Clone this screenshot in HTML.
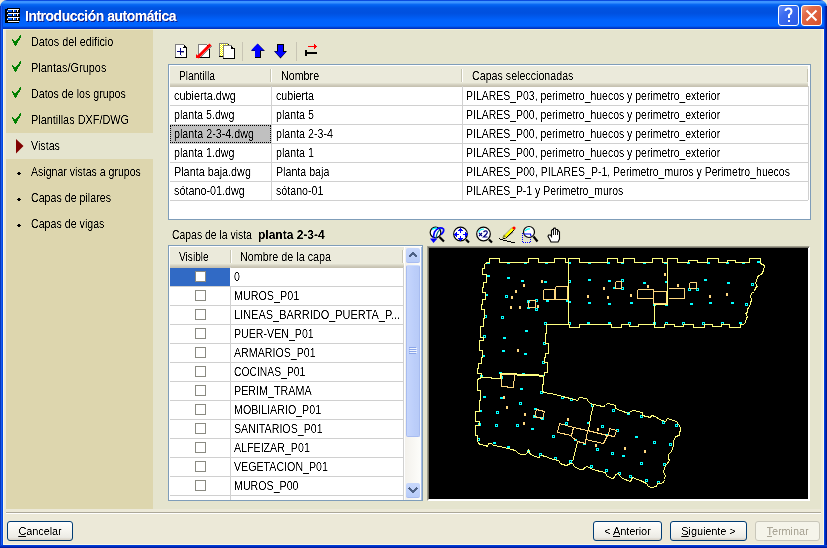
<!DOCTYPE html>
<html><head><meta charset="utf-8">
<style>
*{box-sizing:border-box;margin:0;padding:0}
html,body{width:827px;height:548px;overflow:hidden;background:#ece9d8}
body{position:relative;font-family:"Liberation Sans",sans-serif;font-size:11px;color:#000}
.a{position:absolute}
.t{position:absolute;white-space:nowrap;line-height:12px;font-size:12px;filter:url(#cr)}
.sx{display:inline-block;transform-origin:0 0}
.lab{position:relative;top:1px;letter-spacing:-0.1px;filter:url(#cr)}
#title{position:absolute;left:0;top:0;width:827px;height:29px;border-radius:7px 7px 0 0;
background:linear-gradient(to bottom,#0a4be0 0px,#0a4be0 1px,#3d95ff 1px,#3a91ff 3px,#0c6cf5 4px,#005ded 6px,#0053e1 8px,#0050df 13px,#0055e6 15px,#005cf3 18px,#0062fb 20px,#0063ff 26px,#0050e0 27px,#0036c8 28px,#0030c0 29px)}
#ttext{left:25px;top:9px;font-size:14px;line-height:15px;font-weight:bold;color:#fff;letter-spacing:-0.5px;text-shadow:1px 1px 0 #0a1e8c}
.side{position:absolute;left:6px;top:29px;width:147px;height:480px;background:#ddd6ae}
.panel{position:absolute;left:153px;top:29px;width:668px;height:480px;background:#e5e4ce}
.grid{position:absolute;background:#fff;border:1px solid #7f9db9}
.hdr{position:absolute;height:21px;background:linear-gradient(to bottom,#ebeadb 0,#ebeadb 17px,#e0dfcf 17px,#e0dfcf 18px,#d6d3c3 18px,#d6d3c3 19px,#cdc9b9 19px,#cdc9b9 20px,#c6c2b1 20px)}
.hsep{position:absolute;top:3px;width:1px;height:13px;background:#c7c5b2;box-shadow:1px 0 0 #fff}
.gl{position:absolute;background:#d0d0d0}
.btn{position:absolute;top:521px;height:20px;border:1px solid #003c74;border-radius:3px;
background:linear-gradient(to bottom,#fff 0%,#f8f7f2 40%,#ecebe5 85%,#d6d0c5 100%);text-align:center;line-height:17px}
</style></head><body>
<svg width="0" height="0" style="position:absolute"><filter id="cr" x="0" y="0" width="100%" height="100%"><feComponentTransfer><feFuncA type="linear" slope="2" intercept="-0.5"/></feComponentTransfer></filter></svg>
<div id="title"><div class="t" id="ttext">Introducción automática</div></div>
<div class="a" style="left:0;top:6px;width:3px;height:542px;background:linear-gradient(to right,#0a36b8 0px,#0a36b8 1px,#1a5cf0 1px,#1a5cf0 2px,#0048e0 2px)"></div>
<div class="a" style="left:824px;top:6px;width:3px;height:542px;background:linear-gradient(to right,#0040e0 0px,#0040e0 1px,#0028b8 1px,#0028b8 2px,#001890 2px)"></div>
<div class="a" style="left:0;top:545px;width:827px;height:3px;background:linear-gradient(to bottom,#0046e6,#0024b0 2px,#00169a)"></div>
<div class="a" style="left:3px;top:29px;width:1px;height:516px;background:#fbf7e4"></div>
<div class="a" style="left:823px;top:29px;width:1px;height:516px;background:#fbf7e4"></div>
<div class="a" style="left:3px;top:544px;width:821px;height:1px;background:#fbf7e4"></div>
<div class="side"></div><div class="panel"></div>
<div class="a" style="left:3px;top:29px;width:821px;height:1px;background:rgba(255,250,215,0.55)"></div>
<div class="a" style="left:6px;top:133px;width:147px;height:26px;background:#e5e4ce"></div>
<div class="t" style="left:31px;top:36px;"><span class="sx" style="transform:scaleX(0.9)">Datos del edificio</span></div>
<div class="t" style="left:31px;top:62px;"><span class="sx" style="transform:scaleX(0.911)">Plantas/Grupos</span></div>
<div class="t" style="left:31px;top:88px;"><span class="sx" style="transform:scaleX(0.889)">Datos de los grupos</span></div>
<div class="t" style="left:31px;top:114px;"><span class="sx" style="transform:scaleX(0.908)">Plantillas DXF/DWG</span></div>
<div class="t" style="left:31px;top:140px;"><span class="sx" style="transform:scaleX(0.891)">Vistas</span></div>
<div class="t" style="left:31px;top:166px;"><span class="sx" style="transform:scaleX(0.881)">Asignar vistas a grupos</span></div>
<div class="t" style="left:31px;top:192px;"><span class="sx" style="transform:scaleX(0.888)">Capas de pilares</span></div>
<div class="t" style="left:31px;top:218px;"><span class="sx" style="transform:scaleX(0.888)">Capas de vigas</span></div>
<svg class="a" style="left:0;top:0" width="30" height="240" shape-rendering="crispEdges"><g fill="#008000"><rect x="20" y="35" width="1" height="1"/><rect x="19" y="36" width="2" height="1"/><rect x="19" y="37" width="2" height="1"/><rect x="18" y="38" width="2" height="1"/><rect x="12" y="39" width="1" height="1"/><rect x="17" y="39" width="3" height="1"/><rect x="12" y="40" width="2" height="1"/><rect x="16" y="40" width="3" height="1"/><rect x="13" y="41" width="5" height="1"/><rect x="13" y="42" width="5" height="1"/><rect x="14" y="43" width="3" height="1"/><rect x="14" y="44" width="3" height="1"/><rect x="15" y="45" width="1" height="1"/><rect x="20" y="61" width="1" height="1"/><rect x="19" y="62" width="2" height="1"/><rect x="19" y="63" width="2" height="1"/><rect x="18" y="64" width="2" height="1"/><rect x="12" y="65" width="1" height="1"/><rect x="17" y="65" width="3" height="1"/><rect x="12" y="66" width="2" height="1"/><rect x="16" y="66" width="3" height="1"/><rect x="13" y="67" width="5" height="1"/><rect x="13" y="68" width="5" height="1"/><rect x="14" y="69" width="3" height="1"/><rect x="14" y="70" width="3" height="1"/><rect x="15" y="71" width="1" height="1"/><rect x="20" y="87" width="1" height="1"/><rect x="19" y="88" width="2" height="1"/><rect x="19" y="89" width="2" height="1"/><rect x="18" y="90" width="2" height="1"/><rect x="12" y="91" width="1" height="1"/><rect x="17" y="91" width="3" height="1"/><rect x="12" y="92" width="2" height="1"/><rect x="16" y="92" width="3" height="1"/><rect x="13" y="93" width="5" height="1"/><rect x="13" y="94" width="5" height="1"/><rect x="14" y="95" width="3" height="1"/><rect x="14" y="96" width="3" height="1"/><rect x="15" y="97" width="1" height="1"/><rect x="20" y="113" width="1" height="1"/><rect x="19" y="114" width="2" height="1"/><rect x="19" y="115" width="2" height="1"/><rect x="18" y="116" width="2" height="1"/><rect x="12" y="117" width="1" height="1"/><rect x="17" y="117" width="3" height="1"/><rect x="12" y="118" width="2" height="1"/><rect x="16" y="118" width="3" height="1"/><rect x="13" y="119" width="5" height="1"/><rect x="13" y="120" width="5" height="1"/><rect x="14" y="121" width="3" height="1"/><rect x="14" y="122" width="3" height="1"/><rect x="15" y="123" width="1" height="1"/></g><polygon points="16,139 16,153.5 23.5,146" fill="#800000" shape-rendering="geometricPrecision"/><g fill="#000"><rect x="18" y="172" width="2" height="3"/><rect x="17" y="173" width="4" height="1"/><rect x="18" y="198" width="2" height="3"/><rect x="17" y="199" width="4" height="1"/><rect x="18" y="224" width="2" height="3"/><rect x="17" y="225" width="4" height="1"/></g></svg>
<svg class="a" style="left:0;top:0" width="827" height="29" shape-rendering="crispEdges">
<g fill="#000"><rect x="7" y="8" width="13" height="1"/><rect x="5" y="12" width="15" height="1"/><rect x="5" y="16" width="15" height="1"/><rect x="5" y="20" width="15" height="1"/><rect x="5" y="22" width="14" height="1"/><rect x="5" y="9" width="2" height="13"/><rect x="7" y="9" width="1" height="1"/><rect x="7" y="13" width="1" height="1"/><rect x="7" y="17" width="1" height="1"/><rect x="7" y="21" width="1" height="1"/><rect x="19" y="9" width="1" height="1"/><rect x="12" y="10" width="1" height="2"/><rect x="16" y="10" width="1" height="2"/><rect x="18" y="10" width="2" height="2"/><rect x="5" y="10" width="2" height="2"/><rect x="12" y="14" width="1" height="2"/><rect x="16" y="14" width="1" height="2"/><rect x="18" y="14" width="2" height="2"/><rect x="5" y="14" width="2" height="2"/><rect x="12" y="18" width="1" height="2"/><rect x="16" y="18" width="1" height="2"/><rect x="18" y="18" width="2" height="2"/><rect x="5" y="18" width="2" height="2"/><rect x="11" y="22" width="1" height="1"/></g><g fill="#fff"><rect x="8" y="9" width="11" height="1"/><rect x="8" y="13" width="11" height="1"/><rect x="8" y="17" width="11" height="1"/><rect x="8" y="21" width="11" height="1"/><rect x="13" y="10" width="1" height="2"/><rect x="17" y="10" width="1" height="2"/><rect x="7" y="11" width="1" height="1"/><rect x="13" y="14" width="1" height="2"/><rect x="17" y="14" width="1" height="2"/><rect x="7" y="15" width="1" height="1"/><rect x="13" y="18" width="1" height="2"/><rect x="17" y="18" width="1" height="2"/><rect x="7" y="19" width="1" height="1"/></g>
</svg>
<div class="a" style="left:778px;top:5px;width:21px;height:21px;border:1px solid #fff;border-radius:3px;background:linear-gradient(135deg,#6a90f8 0%,#3c6cf0 35%,#2a5ae6 100%)"></div>
<div class="a" style="left:801px;top:5px;width:21px;height:21px;border:1px solid #fff;border-radius:3px;background:linear-gradient(135deg,#f0a080 0%,#e26a48 30%,#d8502a 100%)"></div>
<svg class="a" style="left:0;top:0" width="827" height="29">
<path d="M785.5,11 Q785.5,8.5 788.5,8.5 Q791.5,8.5 791.5,11.5 Q791.5,13.5 789,15 L789,18" stroke="#fff" stroke-width="2" fill="none"/>
<rect x="788" y="20" width="2" height="2" fill="#fff"/>
<path d="M806.5,10.5 L816.5,20.5 M816.5,10.5 L806.5,20.5" stroke="#fff" stroke-width="2"/>
</svg>
<svg class="a" style="left:0;top:0" width="330" height="64" shape-rendering="crispEdges">
<!-- icon1 new -->
<rect x="175" y="44" width="9" height="1" fill="#808080"/>
<rect x="175" y="44" width="1" height="14" fill="#808080"/>
<rect x="176" y="45" width="8" height="12" fill="#fff"/>
<rect x="184" y="47" width="2" height="10" fill="#fff"/>
<rect x="184" y="45" width="1" height="2" fill="#000"/><rect x="185" y="46" width="1" height="1" fill="#000"/><rect x="183" y="47" width="3" height="1" fill="#000"/>
<rect x="186" y="47" width="1" height="11" fill="#000"/>
<rect x="175" y="57" width="12" height="1" fill="#000"/>
<rect x="180" y="48" width="1" height="7" fill="#000080"/><rect x="177" y="51" width="7" height="1" fill="#000080"/>
<rect x="181" y="52" width="3" height="1" fill="#a0a0a0"/><rect x="181" y="55" width="1" height="1" fill="#a0a0a0"/>
<!-- icon2 delete -->
<rect x="198" y="44" width="9" height="1" fill="#808080"/>
<rect x="198" y="44" width="1" height="14" fill="#808080"/>
<rect x="199" y="45" width="10" height="12" fill="#fff"/>
<rect x="209" y="48" width="1" height="10" fill="#000"/>
<rect x="199" y="57" width="11" height="1" fill="#000"/>
<rect x="207" y="45" width="1" height="2" fill="#000"/>
</svg>
<svg class="a" style="left:0;top:0" width="330" height="64">
<path d="M210.5,44.5 L197.5,57.5" stroke="#ff0000" stroke-width="3" />
<path d="M212,46 L201,57" stroke="#7a8a8a" stroke-width="1" />
<path d="M196,54 L196,58 L200,58 Z" fill="#ff0000"/>
</svg>
<svg class="a" style="left:0;top:0" width="330" height="64" shape-rendering="crispEdges">
<!-- icon3 copy -->
<rect x="219" y="43" width="9" height="1" fill="#808080"/>
<rect x="219" y="43" width="1" height="14" fill="#808080"/>
<rect x="220" y="44" width="8" height="12" fill="#ffff00"/>
<rect x="228" y="44" width="1" height="1" fill="#000"/>
<rect x="219" y="56" width="4" height="1" fill="#000"/>
<g fill="#fff"><rect x="220" y="44" width="1" height="1"/><rect x="222" y="44" width="1" height="1"/><rect x="224" y="44" width="1" height="1"/><rect x="226" y="44" width="1" height="1"/><rect x="221" y="45" width="1" height="1"/><rect x="223" y="45" width="1" height="1"/><rect x="225" y="45" width="1" height="1"/><rect x="227" y="45" width="1" height="1"/><rect x="220" y="46" width="1" height="1"/><rect x="222" y="46" width="1" height="1"/><rect x="224" y="46" width="1" height="1"/><rect x="226" y="46" width="1" height="1"/><rect x="221" y="47" width="1" height="1"/><rect x="223" y="47" width="1" height="1"/><rect x="225" y="47" width="1" height="1"/><rect x="227" y="47" width="1" height="1"/><rect x="220" y="48" width="1" height="1"/><rect x="222" y="48" width="1" height="1"/><rect x="224" y="48" width="1" height="1"/><rect x="226" y="48" width="1" height="1"/><rect x="221" y="49" width="1" height="1"/><rect x="223" y="49" width="1" height="1"/><rect x="225" y="49" width="1" height="1"/><rect x="227" y="49" width="1" height="1"/><rect x="220" y="50" width="1" height="1"/><rect x="222" y="50" width="1" height="1"/><rect x="224" y="50" width="1" height="1"/><rect x="226" y="50" width="1" height="1"/><rect x="221" y="51" width="1" height="1"/><rect x="223" y="51" width="1" height="1"/><rect x="225" y="51" width="1" height="1"/><rect x="227" y="51" width="1" height="1"/><rect x="220" y="52" width="1" height="1"/><rect x="222" y="52" width="1" height="1"/><rect x="224" y="52" width="1" height="1"/><rect x="226" y="52" width="1" height="1"/><rect x="221" y="53" width="1" height="1"/><rect x="223" y="53" width="1" height="1"/><rect x="225" y="53" width="1" height="1"/><rect x="227" y="53" width="1" height="1"/><rect x="220" y="54" width="1" height="1"/><rect x="222" y="54" width="1" height="1"/><rect x="224" y="54" width="1" height="1"/><rect x="226" y="54" width="1" height="1"/><rect x="221" y="55" width="1" height="1"/><rect x="223" y="55" width="1" height="1"/><rect x="225" y="55" width="1" height="1"/><rect x="227" y="55" width="1" height="1"/></g>
<rect x="223" y="45" width="9" height="1" fill="#808080"/>
<rect x="223" y="45" width="1" height="14" fill="#808080"/>
<rect x="224" y="46" width="8" height="12" fill="#fff"/>
<rect x="232" y="48" width="2" height="10" fill="#fff"/>
<rect x="231" y="46" width="1" height="2" fill="#000"/><rect x="232" y="47" width="1" height="1" fill="#000"/><rect x="231" y="48" width="3" height="1" fill="#000"/>
<rect x="234" y="48" width="1" height="11" fill="#000"/>
<rect x="223" y="58" width="12" height="1" fill="#000"/>
<!-- separators -->
<rect x="242" y="42" width="1" height="19" fill="#c8c5b4"/>
<rect x="296" y="42" width="1" height="19" fill="#c8c5b4"/>
<!-- T icon -->
<rect x="305" y="50" width="2" height="6" fill="#000"/>
<rect x="307" y="52" width="10" height="2" fill="#000"/>
<rect x="308" y="46" width="7" height="1" fill="#ff0000"/>
<rect x="314" y="44" width="1" height="5" fill="#ff0000"/><rect x="315" y="45" width="1" height="3" fill="#ff0000"/><rect x="316" y="46" width="1" height="1" fill="#ff0000"/>
</svg>
<svg class="a" style="left:0;top:0" width="330" height="64">
<polygon points="258,44 265,51 261,51 261,58 255,58 255,51 251,51" fill="#000"/>
<polygon points="257.5,43.5 251,50.5 255,50.5 255,57 260,57 260,50.5 264,50.5" fill="#0000ff"/>
<polygon points="277,44 284,44 284,51 287,51 280.5,58.5 274,51 277,51" fill="#000"/>
<polygon points="278,45 283,45 283,52 286,52 280.5,57.5 274.5,51.5 278,51.5" fill="#0000ff"/>
</svg>
<div class="grid" style="left:168px;top:64px;width:643px;height:156px"></div>
<div class="hdr" style="left:170px;top:66px;width:638px"></div>
<div class="hsep" style="left:270px;top:69px"></div>
<div class="hsep" style="left:461px;top:69px"></div>
<div class="hsep" style="left:807px;top:69px"></div>
<div class="t" style="left:179px;top:70px;"><span class="sx" style="transform:scaleX(0.854)">Plantilla</span></div>
<div class="t" style="left:281px;top:70px;"><span class="sx" style="transform:scaleX(0.893)">Nombre</span></div>
<div class="t" style="left:472px;top:70px;"><span class="sx" style="transform:scaleX(0.889)">Capas seleccionadas</span></div>
<div class="gl" style="left:271px;top:86px;width:1px;height:114px"></div>
<div class="gl" style="left:462px;top:86px;width:1px;height:114px"></div>
<div class="gl" style="left:808px;top:86px;width:1px;height:114px"></div>
<div class="gl" style="left:170px;top:105px;width:638px;height:1px"></div>
<div class="gl" style="left:170px;top:124px;width:638px;height:1px"></div>
<div class="gl" style="left:170px;top:143px;width:638px;height:1px"></div>
<div class="gl" style="left:170px;top:162px;width:638px;height:1px"></div>
<div class="gl" style="left:170px;top:181px;width:638px;height:1px"></div>
<div class="gl" style="left:170px;top:200px;width:638px;height:1px"></div>
<div class="a" style="left:170px;top:125px;width:101px;height:18px;background:#c0c0c0;border:1px dotted #000"></div>
<div class="t" style="left:174px;top:90px;"><span class="sx" style="transform:scaleX(0.909)">cubierta.dwg</span></div>
<div class="t" style="left:276px;top:90px;"><span class="sx" style="transform:scaleX(0.888)">cubierta</span></div>
<div class="t" style="left:466px;top:90px;"><span class="sx" style="transform:scaleX(0.872)">PILARES_P03, perimetro_huecos y perimetro_exterior</span></div>
<div class="t" style="left:174px;top:109px;"><span class="sx" style="transform:scaleX(0.888)">planta 5.dwg</span></div>
<div class="t" style="left:276px;top:109px;"><span class="sx" style="transform:scaleX(0.888)">planta 5</span></div>
<div class="t" style="left:466px;top:109px;"><span class="sx" style="transform:scaleX(0.872)">PILARES_P00, perimetro_huecos y perimetro_exterior</span></div>
<div class="t" style="left:174px;top:128px;"><span class="sx" style="transform:scaleX(0.894)">planta 2-3-4.dwg</span></div>
<div class="t" style="left:276px;top:128px;"><span class="sx" style="transform:scaleX(0.888)">planta 2-3-4</span></div>
<div class="t" style="left:466px;top:128px;"><span class="sx" style="transform:scaleX(0.872)">PILARES_P00, perimetro_huecos y perimetro_exterior</span></div>
<div class="t" style="left:174px;top:147px;"><span class="sx" style="transform:scaleX(0.888)">planta 1.dwg</span></div>
<div class="t" style="left:276px;top:147px;"><span class="sx" style="transform:scaleX(0.888)">planta 1</span></div>
<div class="t" style="left:466px;top:147px;"><span class="sx" style="transform:scaleX(0.872)">PILARES_P00, perimetro_huecos y perimetro_exterior</span></div>
<div class="t" style="left:174px;top:166px;"><span class="sx" style="transform:scaleX(0.901)">Planta baja.dwg</span></div>
<div class="t" style="left:276px;top:166px;"><span class="sx" style="transform:scaleX(0.888)">Planta baja</span></div>
<div class="t" style="left:466px;top:166px;"><span class="sx" style="transform:scaleX(0.875)">PILARES_P00, PILARES_P-1, Perimetro_muros y Perimetro_huecos</span></div>
<div class="t" style="left:174px;top:185px;"><span class="sx" style="transform:scaleX(0.899)">sótano-01.dwg</span></div>
<div class="t" style="left:276px;top:185px;"><span class="sx" style="transform:scaleX(0.888)">sótano-01</span></div>
<div class="t" style="left:466px;top:185px;"><span class="sx" style="transform:scaleX(0.87)">PILARES_P-1 y Perimetro_muros</span></div>
<div class="t" style="left:172px;top:229px;"><span class="sx" style="transform:scaleX(0.868)">Capas de la vista</span></div>
<div class="t" style="left:258px;top:229px;font-weight:bold"><span class="sx" style="transform:scaleX(1.0)">planta 2-3-4</span></div>
<div class="grid" style="left:168px;top:245px;width:255px;height:256px;overflow:hidden">
<div class="hdr" style="left:1px;top:1px;width:234px"></div>
<div class="hsep" style="left:61px;top:4px"></div>
<div class="hsep" style="left:233px;top:4px"></div>
<div class="t" style="left:10px;top:5px;"><span class="sx" style="transform:scaleX(0.846)">Visible</span></div>
<div class="t" style="left:71px;top:5px;"><span class="sx" style="transform:scaleX(0.898)">Nombre de la capa</span></div>
<div class="gl" style="left:61px;top:21px;width:1px;height:240px"></div>
<div class="gl" style="left:234px;top:21px;width:1px;height:240px"></div>
<div class="gl" style="left:1px;top:40px;width:234px;height:1px"></div>
<div class="gl" style="left:1px;top:59px;width:234px;height:1px"></div>
<div class="gl" style="left:1px;top:78px;width:234px;height:1px"></div>
<div class="gl" style="left:1px;top:97px;width:234px;height:1px"></div>
<div class="gl" style="left:1px;top:116px;width:234px;height:1px"></div>
<div class="gl" style="left:1px;top:135px;width:234px;height:1px"></div>
<div class="gl" style="left:1px;top:154px;width:234px;height:1px"></div>
<div class="gl" style="left:1px;top:173px;width:234px;height:1px"></div>
<div class="gl" style="left:1px;top:192px;width:234px;height:1px"></div>
<div class="gl" style="left:1px;top:211px;width:234px;height:1px"></div>
<div class="gl" style="left:1px;top:230px;width:234px;height:1px"></div>
<div class="gl" style="left:1px;top:249px;width:234px;height:1px"></div>
<div class="gl" style="left:1px;top:268px;width:234px;height:1px"></div>
<div class="a" style="left:1px;top:22px;width:60px;height:18px;background:#316ac5"></div>
<div class="a" style="left:61px;top:22px;width:1px;height:18px;background:#fff"></div>
<div class="a" style="left:26px;top:25px;width:11px;height:11px;border:1px solid #8a8a82;background:#fff"></div>
<div class="t" style="left:65px;top:25px;"><span class="sx" style="transform:scaleX(0.888)">0</span></div>
<div class="a" style="left:26px;top:44px;width:11px;height:11px;border:1px solid #8a8a82;background:#fff"></div>
<div class="t" style="left:65px;top:44px;"><span class="sx" style="transform:scaleX(0.896)">MUROS_P01</span></div>
<div class="a" style="left:26px;top:63px;width:11px;height:11px;border:1px solid #8a8a82;background:#fff"></div>
<div class="t" style="left:65px;top:63px;"><span class="sx" style="transform:scaleX(0.915)">LINEAS_BARRIDO_PUERTA_P...</span></div>
<div class="a" style="left:26px;top:82px;width:11px;height:11px;border:1px solid #8a8a82;background:#fff"></div>
<div class="t" style="left:65px;top:82px;"><span class="sx" style="transform:scaleX(0.886)">PUER-VEN_P01</span></div>
<div class="a" style="left:26px;top:101px;width:11px;height:11px;border:1px solid #8a8a82;background:#fff"></div>
<div class="t" style="left:65px;top:101px;"><span class="sx" style="transform:scaleX(0.887)">ARMARIOS_P01</span></div>
<div class="a" style="left:26px;top:120px;width:11px;height:11px;border:1px solid #8a8a82;background:#fff"></div>
<div class="t" style="left:65px;top:120px;"><span class="sx" style="transform:scaleX(0.862)">COCINAS_P01</span></div>
<div class="a" style="left:26px;top:139px;width:11px;height:11px;border:1px solid #8a8a82;background:#fff"></div>
<div class="t" style="left:65px;top:139px;"><span class="sx" style="transform:scaleX(0.895)">PERIM_TRAMA</span></div>
<div class="a" style="left:26px;top:158px;width:11px;height:11px;border:1px solid #8a8a82;background:#fff"></div>
<div class="t" style="left:65px;top:158px;"><span class="sx" style="transform:scaleX(0.888)">MOBILIARIO_P01</span></div>
<div class="a" style="left:26px;top:177px;width:11px;height:11px;border:1px solid #8a8a82;background:#fff"></div>
<div class="t" style="left:65px;top:177px;"><span class="sx" style="transform:scaleX(0.888)">SANITARIOS_P01</span></div>
<div class="a" style="left:26px;top:196px;width:11px;height:11px;border:1px solid #8a8a82;background:#fff"></div>
<div class="t" style="left:65px;top:196px;"><span class="sx" style="transform:scaleX(0.888)">ALFEIZAR_P01</span></div>
<div class="a" style="left:26px;top:215px;width:11px;height:11px;border:1px solid #8a8a82;background:#fff"></div>
<div class="t" style="left:65px;top:215px;"><span class="sx" style="transform:scaleX(0.888)">VEGETACION_P01</span></div>
<div class="a" style="left:26px;top:234px;width:11px;height:11px;border:1px solid #8a8a82;background:#fff"></div>
<div class="t" style="left:65px;top:234px;"><span class="sx" style="transform:scaleX(0.888)">MUROS_P00</span></div>
<div class="a" style="left:236px;top:1px;width:17px;height:253px;background:linear-gradient(to right,#f3f1ec,#fefefb)"></div>
<div class="a" style="left:237px;top:2px;width:14px;height:15px;border-radius:2px;background:linear-gradient(to bottom,#c8d8fc,#b8ccf8);border-bottom:1px solid #a8bcf0"></div>
<svg class="a" style="left:237px;top:2px" width="15" height="15" shape-rendering="crispEdges"><path d="M3,9 L7,5 L11,9" stroke="#4d6185" stroke-width="2" fill="none"/></svg>
<div class="a" style="left:237px;top:19px;width:14px;height:172px;border-radius:2px;background:linear-gradient(to right,#c6d6fc,#bccefa 60%,#b8cbf7);border:1px solid #a8bcf0;border-top-color:#ccdcfd"></div>
<svg class="a" style="left:240px;top:101px" width="8" height="8" shape-rendering="crispEdges"><g fill="#8aa5e8"><rect x="0" y="0" width="7" height="1"/><rect x="0" y="2" width="7" height="1"/><rect x="0" y="4" width="7" height="1"/><rect x="0" y="6" width="7" height="1"/></g><g fill="#eef3fe"><rect x="1" y="1" width="7" height="1"/><rect x="1" y="3" width="7" height="1"/><rect x="1" y="5" width="7" height="1"/></g></svg>
<div class="a" style="left:237px;top:237px;width:14px;height:15px;border-radius:2px;background:linear-gradient(to bottom,#c8d8fc,#b8ccf8);border-bottom:1px solid #a8bcf0"></div>
<svg class="a" style="left:237px;top:237px" width="15" height="15" shape-rendering="crispEdges"><path d="M3,5 L7,9 L11,5" stroke="#4d6185" stroke-width="2" fill="none"/></svg>
<div class="a" style="left:252px;top:1px;width:1px;height:253px;background:#a6bde8"></div>
</div>
<svg class="a" style="left:0;top:0" width="600" height="250">
<!-- icon 1: zoom previous -->
<circle cx="435.5" cy="232.5" r="5.3" fill="#fff" stroke="#000" stroke-width="1.2"/>
<path d="M432,229.5 Q434,228 437,228" stroke="#00ffff" stroke-width="1.3" fill="none"/>
<path d="M439.5,237 L444,241.5" stroke="#000" stroke-width="2.2"/>
<path d="M441,229 Q437,231 436,238" stroke="#0a6a8a" stroke-width="1.2" fill="none"/>
<path d="M441,234.5 Q444.5,231.5 443.5,229 Q442,227.5 439,228 Q436,229.5 434.5,232 Q433.5,235 433.5,238" stroke="#0000ff" stroke-width="1.7" fill="none"/>
<polygon points="430,238.5 437.5,238.5 433.5,243" fill="#0000ff"/>
<!-- icon 2: zoom extents -->
<circle cx="460.5" cy="234" r="6.8" fill="#fff" stroke="#000" stroke-width="1.2"/>
<path d="M466,239.5 L469,242.5" stroke="#000" stroke-width="2.2"/>
<g fill="#0000ff" shape-rendering="crispEdges">
<rect x="460" y="228" width="1" height="1"/><rect x="459" y="229" width="3" height="1"/><rect x="458" y="230" width="5" height="1"/><rect x="460" y="231" width="1" height="2"/>
<rect x="460" y="240" width="1" height="1"/><rect x="459" y="239" width="3" height="1"/><rect x="458" y="238" width="5" height="1"/><rect x="460" y="236" width="1" height="2"/>
<rect x="454" y="234" width="1" height="1"/><rect x="455" y="233" width="1" height="3"/><rect x="456" y="232" width="1" height="5"/><rect x="457" y="234" width="2" height="1"/>
<rect x="467" y="234" width="1" height="1"/><rect x="466" y="233" width="1" height="3"/><rect x="465" y="232" width="1" height="5"/><rect x="463" y="234" width="2" height="1"/>
</g>
<!-- icon 3: x2 -->
<circle cx="483.5" cy="234" r="6.8" fill="#fff" stroke="#000" stroke-width="1.2"/>
<path d="M489,239.5 L492,242.5" stroke="#000" stroke-width="2.2"/>
<path d="M478.5,232.5 Q480,229 484,229" stroke="#00ffff" stroke-width="1.2" fill="none"/>
<path d="M479,233 L482,236 M482,233 L479,236" stroke="#000080" stroke-width="1.1"/>
<path d="M483.5,232 Q485,230.5 486.5,231 Q488,232 486.5,234 L483.5,237 L487.5,237" stroke="#000080" stroke-width="1.2" fill="none"/>
<!-- icon 4: pencil -->
<g fill="#000" shape-rendering="crispEdges"><rect x="499" y="238" width="1" height="1"/><rect x="500" y="239" width="3" height="1"/><rect x="503" y="238" width="2" height="1"/><rect x="503" y="240" width="4" height="1"/><rect x="507" y="241" width="4" height="1"/><rect x="511" y="242" width="4" height="1"/></g>
<path d="M505.5,238 L513,232" stroke="#888" stroke-width="1.5" fill="none"/>
<path d="M504.5,237 L513.5,228" stroke="#ffff00" stroke-width="3" fill="none"/>
<path d="M505.5,238.5 L514.5,229.5" stroke="#000" stroke-width="1" fill="none"/>
<path d="M503.5,236 L512,227.5" stroke="#8888aa" stroke-width="0.8" fill="none"/>
<polygon points="502,238.5 504,234.5 506,236.5" fill="#8a8a20"/>
<circle cx="514" cy="228" r="1.6" fill="#ff0000"/>
<!-- icon 5: zoom window -->
<g fill="#0000ff" shape-rendering="crispEdges"><rect x="522" y="233" width="1" height="1"/><rect x="522" y="235" width="1" height="1"/><rect x="522" y="237" width="1" height="1"/><rect x="522" y="239" width="1" height="1"/><rect x="522" y="241" width="1" height="1"/><rect x="523" y="242" width="1" height="1"/><rect x="525" y="242" width="1" height="1"/><rect x="527" y="242" width="1" height="1"/><rect x="529" y="242" width="1" height="1"/><rect x="530" y="241" width="1" height="1"/><rect x="530" y="239" width="1" height="1"/><rect x="530" y="237" width="1" height="1"/></g>
<circle cx="529" cy="232" r="5.5" fill="#fff" stroke="#000" stroke-width="1.2"/>
<path d="M525,231 Q527,228.5 530,229" stroke="#00ffff" stroke-width="1.2" fill="none"/>
<path d="M524,234 L530.5,234 L531,236" stroke="#0000ff" stroke-width="1.2" fill="none"/>
<path d="M533.5,236.5 L537.5,241.5" stroke="#000" stroke-width="2.2"/>
<!-- icon 6: hand -->
<path d="M548.5,235 L550.5,235 L551.5,236.5 L551.5,230.5 L552.5,229.5 L553.5,229.5 L553.5,228.5 L555,228 L556,229.5 L557.5,229.5 L558.5,231 L559.5,232 L559.5,239 L558.5,241 L558,242 L551,242 L549.5,239 L548,236.5 Z" fill="#fff" stroke="#000" stroke-width="1.1"/>
<path d="M553.5,230 L553.5,235 M555.5,229.5 L555.5,235 M557.5,230 L557.5,235" stroke="#000" stroke-width="0.9"/>
</svg>
<div class="a" style="left:427px;top:246px;width:383px;height:255px;background:#000;border-style:solid;border-width:2px 2px 2px 2px;border-color:#a09e8e #fff #fff #a09e8e"></div>
<div class="a" style="left:428px;top:247px;width:381px;height:1px;background:#716f64"></div>
<div class="a" style="left:428px;top:247px;width:1px;height:252px;background:#716f64"></div>
<svg class="a" style="left:0;top:0" width="827" height="548"><g fill="#00ffff" shape-rendering="crispEdges"><rect x="487" y="262" width="3" height="2"/><rect x="507" y="262" width="3" height="2"/><rect x="524" y="262" width="3" height="2"/><rect x="545" y="262" width="3" height="2"/><rect x="568" y="262" width="3" height="2"/><rect x="588" y="262" width="3" height="2"/><rect x="607" y="262" width="3" height="2"/><rect x="621" y="262" width="3" height="2"/><rect x="643" y="262" width="3" height="2"/><rect x="664" y="262" width="3" height="2"/><rect x="687" y="262" width="3" height="2"/><rect x="707" y="262" width="3" height="2"/><rect x="726" y="262" width="3" height="2"/><rect x="742" y="262" width="3" height="2"/><rect x="757" y="261" width="3" height="2"/><rect x="487" y="275" width="3" height="2"/><rect x="507" y="277" width="3" height="2"/><rect x="521" y="280" width="3" height="2"/><rect x="544" y="281" width="3" height="2"/><rect x="588" y="279" width="3" height="2"/><rect x="608" y="280" width="3" height="2"/><rect x="643" y="282" width="3" height="2"/><rect x="665" y="281" width="3" height="2"/><rect x="704" y="279" width="3" height="2"/><rect x="727" y="282" width="3" height="2"/><rect x="485" y="294" width="3" height="2"/><rect x="546" y="300" width="3" height="2"/><rect x="566" y="300" width="3" height="2"/><rect x="613" y="287" width="3" height="2"/><rect x="527" y="307" width="3" height="2"/><rect x="568" y="301" width="3" height="2"/><rect x="588" y="302" width="3" height="2"/><rect x="608" y="303" width="3" height="2"/><rect x="630" y="302" width="3" height="2"/><rect x="665" y="304" width="3" height="2"/><rect x="690" y="303" width="3" height="2"/><rect x="709" y="302" width="3" height="2"/><rect x="731" y="302" width="3" height="2"/><rect x="525" y="330" width="3" height="2"/><rect x="503" y="337" width="3" height="2"/><rect x="502" y="350" width="3" height="2"/><rect x="524" y="353" width="3" height="2"/><rect x="482" y="355" width="3" height="2"/><rect x="587" y="322" width="3" height="2"/><rect x="608" y="322" width="3" height="2"/><rect x="739" y="322" width="3" height="2"/><rect x="480" y="375" width="3" height="2"/><rect x="499" y="372" width="3" height="2"/><rect x="522" y="373" width="3" height="2"/><rect x="541" y="375" width="3" height="2"/><rect x="520" y="388" width="3" height="2"/><rect x="500" y="397" width="3" height="2"/><rect x="483" y="396" width="3" height="2"/><rect x="479" y="410" width="3" height="2"/><rect x="534" y="408" width="3" height="2"/><rect x="493" y="442" width="3" height="2"/><rect x="507" y="446" width="3" height="2"/><rect x="531" y="428" width="3" height="2"/><rect x="587" y="422" width="3" height="2"/><rect x="635" y="436" width="3" height="2"/><rect x="574" y="439" width="3" height="2"/><rect x="583" y="443" width="3" height="2"/><rect x="606" y="434" width="3" height="2"/><rect x="622" y="455" width="3" height="2"/></g><g fill="#00ffff" shape-rendering="crispEdges"><rect x="505" y="295" width="3" height="3"/><rect x="527" y="300" width="3" height="3"/><rect x="535" y="299" width="3" height="3"/><rect x="535" y="308" width="3" height="3"/><rect x="568" y="280" width="3" height="3"/><rect x="621" y="279" width="3" height="3"/><rect x="621" y="287" width="3" height="3"/><rect x="653" y="303" width="3" height="3"/><rect x="751" y="283" width="3" height="3"/><rect x="688" y="288" width="3" height="3"/><rect x="696" y="288" width="3" height="3"/><rect x="745" y="303" width="3" height="3"/><rect x="484" y="315" width="3" height="3"/><rect x="501" y="316" width="3" height="3"/><rect x="483" y="335" width="3" height="3"/><rect x="544" y="322" width="3" height="3"/><rect x="543" y="342" width="3" height="3"/><rect x="542" y="361" width="3" height="3"/><rect x="568" y="322" width="3" height="3"/><rect x="628" y="322" width="3" height="3"/><rect x="653" y="322" width="3" height="3"/><rect x="665" y="322" width="3" height="3"/><rect x="682" y="322" width="3" height="3"/><rect x="702" y="322" width="3" height="3"/><rect x="721" y="322" width="3" height="3"/><rect x="500" y="376" width="3" height="3"/><rect x="519" y="402" width="3" height="3"/><rect x="496" y="411" width="3" height="3"/><rect x="533" y="415" width="3" height="3"/><rect x="541" y="417" width="3" height="3"/><rect x="540" y="391" width="3" height="3"/><rect x="561" y="396" width="3" height="3"/><rect x="478" y="423" width="3" height="3"/><rect x="495" y="424" width="3" height="3"/><rect x="516" y="424" width="3" height="3"/><rect x="477" y="438" width="3" height="3"/><rect x="527" y="450" width="3" height="3"/><rect x="539" y="453" width="3" height="3"/><rect x="591" y="404" width="3" height="3"/><rect x="612" y="409" width="3" height="3"/><rect x="627" y="412" width="3" height="3"/><rect x="640" y="415" width="3" height="3"/><rect x="662" y="421" width="3" height="3"/><rect x="675" y="424" width="3" height="3"/><rect x="565" y="422" width="3" height="3"/><rect x="601" y="425" width="3" height="3"/><rect x="616" y="429" width="3" height="3"/><rect x="552" y="435" width="3" height="3"/><rect x="653" y="441" width="3" height="3"/><rect x="669" y="443" width="3" height="3"/><rect x="596" y="448" width="3" height="3"/><rect x="611" y="452" width="3" height="3"/><rect x="640" y="462" width="3" height="3"/><rect x="663" y="463" width="3" height="3"/><rect x="554" y="457" width="3" height="3"/><rect x="569" y="460" width="3" height="3"/><rect x="590" y="465" width="3" height="3"/><rect x="605" y="469" width="3" height="3"/><rect x="618" y="472" width="3" height="3"/><rect x="629" y="475" width="3" height="3"/><rect x="645" y="479" width="3" height="3"/><rect x="657" y="481" width="3" height="3"/><rect x="561" y="396" width="3" height="3"/><rect x="570" y="398" width="3" height="3"/></g><g fill="#000" shape-rendering="crispEdges"><rect x="506" y="296" width="1" height="1"/><rect x="528" y="301" width="1" height="1"/><rect x="536" y="300" width="1" height="1"/><rect x="536" y="309" width="1" height="1"/><rect x="569" y="281" width="1" height="1"/><rect x="622" y="280" width="1" height="1"/><rect x="622" y="288" width="1" height="1"/><rect x="654" y="304" width="1" height="1"/><rect x="752" y="284" width="1" height="1"/><rect x="689" y="289" width="1" height="1"/><rect x="697" y="289" width="1" height="1"/><rect x="746" y="304" width="1" height="1"/><rect x="485" y="316" width="1" height="1"/><rect x="502" y="317" width="1" height="1"/><rect x="484" y="336" width="1" height="1"/><rect x="545" y="323" width="1" height="1"/><rect x="544" y="343" width="1" height="1"/><rect x="543" y="362" width="1" height="1"/><rect x="569" y="323" width="1" height="1"/><rect x="629" y="323" width="1" height="1"/><rect x="654" y="323" width="1" height="1"/><rect x="666" y="323" width="1" height="1"/><rect x="683" y="323" width="1" height="1"/><rect x="703" y="323" width="1" height="1"/><rect x="722" y="323" width="1" height="1"/><rect x="501" y="377" width="1" height="1"/><rect x="520" y="403" width="1" height="1"/><rect x="497" y="412" width="1" height="1"/><rect x="534" y="416" width="1" height="1"/><rect x="542" y="418" width="1" height="1"/><rect x="541" y="392" width="1" height="1"/><rect x="562" y="397" width="1" height="1"/><rect x="479" y="424" width="1" height="1"/><rect x="496" y="425" width="1" height="1"/><rect x="517" y="425" width="1" height="1"/><rect x="478" y="439" width="1" height="1"/><rect x="528" y="451" width="1" height="1"/><rect x="540" y="454" width="1" height="1"/><rect x="592" y="405" width="1" height="1"/><rect x="613" y="410" width="1" height="1"/><rect x="628" y="413" width="1" height="1"/><rect x="641" y="416" width="1" height="1"/><rect x="663" y="422" width="1" height="1"/><rect x="676" y="425" width="1" height="1"/><rect x="566" y="423" width="1" height="1"/><rect x="602" y="426" width="1" height="1"/><rect x="617" y="430" width="1" height="1"/><rect x="553" y="436" width="1" height="1"/><rect x="654" y="442" width="1" height="1"/><rect x="670" y="444" width="1" height="1"/><rect x="597" y="449" width="1" height="1"/><rect x="612" y="453" width="1" height="1"/><rect x="641" y="463" width="1" height="1"/><rect x="664" y="464" width="1" height="1"/><rect x="555" y="458" width="1" height="1"/><rect x="570" y="461" width="1" height="1"/><rect x="591" y="466" width="1" height="1"/><rect x="606" y="470" width="1" height="1"/><rect x="619" y="473" width="1" height="1"/><rect x="630" y="476" width="1" height="1"/><rect x="646" y="480" width="1" height="1"/><rect x="658" y="482" width="1" height="1"/><rect x="562" y="397" width="1" height="1"/><rect x="571" y="399" width="1" height="1"/></g><g fill="#ffd880" shape-rendering="crispEdges"><rect x="541" y="280" width="2" height="3"/><rect x="523" y="284" width="2" height="3"/><rect x="515" y="290" width="2" height="3"/><rect x="511" y="296" width="2" height="3"/><rect x="510" y="306" width="2" height="3"/><rect x="519" y="306" width="2" height="3"/><rect x="537" y="305" width="2" height="3"/><rect x="603" y="287" width="2" height="3"/><rect x="587" y="295" width="2" height="3"/><rect x="607" y="296" width="2" height="3"/><rect x="630" y="294" width="2" height="3"/><rect x="647" y="285" width="2" height="3"/><rect x="664" y="273" width="2" height="3"/><rect x="677" y="284" width="2" height="3"/><rect x="726" y="293" width="2" height="3"/><rect x="709" y="295" width="2" height="3"/><rect x="517" y="349" width="2" height="3"/><rect x="503" y="396" width="2" height="3"/><rect x="506" y="406" width="2" height="3"/><rect x="524" y="413" width="2" height="3"/><rect x="523" y="422" width="2" height="3"/><rect x="567" y="418" width="2" height="3"/><rect x="597" y="428" width="2" height="3"/><rect x="595" y="444" width="2" height="3"/><rect x="624" y="447" width="2" height="3"/><rect x="644" y="450" width="2" height="3"/></g><polyline points="484.5,263.5 486.5,263.5 486.5,262.5 489.5,262.5 489.5,258.5 499.5,258.5 499.5,262.5 528.5,262.5 528.5,258.5 538.5,258.5 538.5,262.5 554.5,262.5 554.5,258.5 565.5,258.5 565.5,262.5 568.5,262.5 568.5,258.5 579.5,258.5 579.5,262.5 607.5,262.5 607.5,258.5 617.5,258.5 617.5,262.5 623.5,262.5 623.5,258.5 634.5,258.5 634.5,262.5 652.5,262.5 652.5,258.5 662.5,258.5 662.5,262.5 667.5,262.5 667.5,258.5 677.5,258.5 677.5,262.5 688.5,262.5 688.5,260.5 697.5,260.5 697.5,262.5 707.5,262.5 707.5,258.5 718.5,258.5 718.5,262.5 727.5,262.5 727.5,260.5 735.5,260.5 735.5,262.5 749.5,262.5 749.5,258.5 760.5,258.5 760.5,263.5 764.5,265.5 763.5,270.5 761.5,274.5 758.5,275.5 757.5,277.5 755.5,283.5 757.5,286.5 755.5,287.5 754.5,291.5 751.5,293.5 750.5,296.5 751.5,299.5 750.5,303.5 749.5,307.5 747.5,308.5 747.5,312.5 745.5,313.5 747.5,316.5 746.5,318.5 745.5,322.5 743.5,324.5 740.5,324.5 740.5,327.5 729.5,327.5 729.5,324.5 721.5,324.5 721.5,326.5 712.5,326.5 712.5,324.5 704.5,324.5 704.5,327.5 693.5,327.5 693.5,324.5 683.5,324.5 683.5,326.5 674.5,326.5 674.5,324.5 664.5,324.5 664.5,327.5 654.5,327.5 654.5,324.5 638.5,324.5 638.5,326.5 629.5,326.5 629.5,324.5 621.5,324.5 621.5,327.5 611.5,327.5 611.5,324.5 579.5,324.5 579.5,327.5 569.5,327.5 569.5,324.5 546.5,324.5 546.5,333.5 545.5,333.5 545.5,343.5 548.5,343.5 548.5,353.5 545.5,353.5 545.5,357.5 544.5,357.5 544.5,362.5 547.5,362.5 547.5,372.5 544.5,372.5 544.5,375.5 543.5,376.5 543.5,384.5 542.5,384.5 542.5,391.5 544.5,392.5 555.5,394.5 562.5,396.5 570.5,398.5 577.5,400.5 579.5,397.5 586.5,398.5 588.5,401.5 590.5,403.5 597.5,405.5 603.5,406.5 605.5,405.5 607.5,403.5 612.5,404.5 615.5,405.5 615.5,408.5 620.5,410.5 628.5,413.5 630.5,411.5 633.5,410.5 642.5,412.5 642.5,415.5 650.5,417.5 651.5,415.5 655.5,416.5 659.5,419.5 665.5,421.5 667.5,418.5 676.5,421.5 678.5,424.5 680.5,427.5 679.5,435.5 675.5,436.5 673.5,441.5 673.5,445.5 672.5,449.5 670.5,452.5 668.5,454.5 668.5,458.5 669.5,460.5 666.5,464.5 664.5,467.5 663.5,472.5 665.5,475.5 664.5,479.5 663.5,482.5 660.5,483.5 657.5,483.5 656.5,486.5 651.5,487.5 648.5,486.5 646.5,483.5 640.5,480.5 637.5,479.5 632.5,477.5 630.5,481.5 622.5,478.5 620.5,476.5 618.5,473.5 615.5,474.5 614.5,477.5 612.5,478.5 607.5,476.5 606.5,475.5 605.5,472.5 600.5,471.5 596.5,470.5 590.5,468.5 587.5,466.5 584.5,467.5 583.5,469.5 580.5,469.5 575.5,467.5 574.5,466.5 572.5,463.5 570.5,463.5 568.5,464.5 566.5,465.5 562.5,464.5 560.5,463.5 558.5,460.5 553.5,459.5 550.5,458.5 545.5,456.5 541.5,455.5 540.5,456.5 538.5,457.5 535.5,456.5 530.5,454.5 528.5,450.5 527.5,452.5 525.5,454.5 520.5,454.5 517.5,452.5 515.5,450.5 511.5,449.5 508.5,448.5 503.5,447.5 500.5,446.5 493.5,445.5 491.5,443.5 488.5,443.5 487.5,446.5 485.5,445.5 480.5,444.5 478.5,443.5 477.5,440.5 477.5,435.5 475.5,435.5 475.5,425.5 479.5,425.5 479.5,421.5 475.5,421.5 475.5,411.5 479.5,411.5 479.5,400.5 480.5,400.5 480.5,390.5 477.5,390.5 477.5,379.5 481.5,377.5 481.5,373.5 477.5,373.5 477.5,368.5 478.5,368.5 478.5,363.5 481.5,363.5 481.5,357.5 482.5,357.5 482.5,350.5 479.5,350.5 479.5,340.5 483.5,340.5 483.5,337.5 480.5,337.5 480.5,326.5 483.5,326.5 483.5,318.5 484.5,318.5 484.5,309.5 481.5,309.5 481.5,304.5 482.5,304.5 482.5,299.5 485.5,299.5 485.5,292.5 482.5,292.5 482.5,287.5 483.5,287.5 483.5,282.5 486.5,282.5 486.5,274.5 482.5,274.5 482.5,268.5 484.5,268.5 484.5,263.5" fill="none" stroke="#ffff80" stroke-width="1" shape-rendering="crispEdges"/><polyline points="568.5,258.5 568.5,324.5" fill="none" stroke="#ffff80" stroke-width="1" shape-rendering="crispEdges"/><polyline points="667.5,258.5 667.5,304.5 654.5,304.5 654.5,324.5" fill="none" stroke="#ffff80" stroke-width="1" shape-rendering="crispEdges"/><polyline points="481.5,377.5 491.5,377.5 491.5,378.5 500.5,378.5 500.5,373.5 533.5,374.5 543.5,375.5" fill="none" stroke="#ffff80" stroke-width="1" shape-rendering="crispEdges"/><polyline points="500.5,374.5 533.5,375.5 543.5,376.5" fill="none" stroke="#ffff80" stroke-width="1" shape-rendering="crispEdges"/><polyline points="593.5,405.5 591.5,412.5 588.5,430.5" fill="none" stroke="#ffff80" stroke-width="1" shape-rendering="crispEdges"/><polyline points="577.5,441.5 575.5,450.5 572.5,461.5" fill="none" stroke="#ffff80" stroke-width="1" shape-rendering="crispEdges"/><polyline points="543.5,289.5 554.5,289.5 554.5,299.5 543.5,299.5 543.5,289.5" fill="none" stroke="#ffd880" stroke-width="1" shape-rendering="crispEdges"/><polyline points="555.5,286.5 567.5,286.5 567.5,299.5 555.5,299.5 555.5,286.5" fill="none" stroke="#ffd880" stroke-width="1" shape-rendering="crispEdges"/><polyline points="528.5,300.5 535.5,300.5 535.5,307.5 528.5,307.5 528.5,300.5" fill="none" stroke="#ffd880" stroke-width="1" shape-rendering="crispEdges"/><polyline points="615.5,281.5 621.5,281.5 621.5,288.5 615.5,288.5 615.5,281.5" fill="none" stroke="#ffd880" stroke-width="1" shape-rendering="crispEdges"/><polyline points="637.5,289.5 653.5,289.5 653.5,298.5 637.5,298.5 637.5,289.5" fill="none" stroke="#ffd880" stroke-width="1" shape-rendering="crispEdges"/><polyline points="653.5,291.5 666.5,291.5 666.5,303.5 653.5,303.5 653.5,291.5" fill="none" stroke="#ffd880" stroke-width="1" shape-rendering="crispEdges"/><polyline points="668.5,288.5 684.5,288.5 684.5,298.5 668.5,298.5" fill="none" stroke="#ffd880" stroke-width="1" shape-rendering="crispEdges"/><polyline points="689.5,282.5 696.5,282.5 696.5,288.5 689.5,288.5 689.5,282.5" fill="none" stroke="#ffd880" stroke-width="1" shape-rendering="crispEdges"/><polyline points="501.5,374.5 514.5,374.5 513.5,387.5 507.5,387.5 507.5,386.5 501.5,386.5 501.5,374.5" fill="none" stroke="#ffd880" stroke-width="1" shape-rendering="crispEdges"/><polyline points="536.5,409.5 544.5,411.5 542.5,418.5 534.5,416.5 536.5,409.5" fill="none" stroke="#ffd880" stroke-width="1" shape-rendering="crispEdges"/><polyline points="559.5,423.5 573.5,427.5 571.5,435.5 557.5,432.5 559.5,423.5" fill="none" stroke="#ffd880" stroke-width="1" shape-rendering="crispEdges"/><polyline points="573.5,427.5 587.5,430.5 585.5,443.5 577.5,441.5 571.5,436.5" fill="none" stroke="#ffd880" stroke-width="1" shape-rendering="crispEdges"/><polyline points="587.5,430.5 607.5,435.5 603.5,443.5 585.5,439.5" fill="none" stroke="#ffd880" stroke-width="1" shape-rendering="crispEdges"/><polyline points="609.5,428.5 616.5,430.5 614.5,436.5 608.5,435.5 609.5,428.5" fill="none" stroke="#ffd880" stroke-width="1" shape-rendering="crispEdges"/></svg>
<div class="a" style="left:6px;top:512px;width:815px;height:1px;background:#aca899"></div>
<div class="a" style="left:6px;top:513px;width:815px;height:1px;background:#fff"></div>
<div class="btn" style="left:7px;width:66px;"><span class="lab" style="display:inline-block"><u>C</u>ancelar</span></div>
<div class="btn" style="left:593px;width:69px;"><span class="lab" style="display:inline-block">< <u>A</u>nterior</span></div>
<div class="btn" style="left:670px;width:77px;"><span class="lab" style="display:inline-block"><u>S</u>iguiente ></span></div>
<div class="btn" style="left:755px;width:65px;border-color:#c9c7ba;background:#f5f4ea;color:#aca899"><span class="lab" style="display:inline-block"><u>T</u>erminar</span></div>
</body></html>
